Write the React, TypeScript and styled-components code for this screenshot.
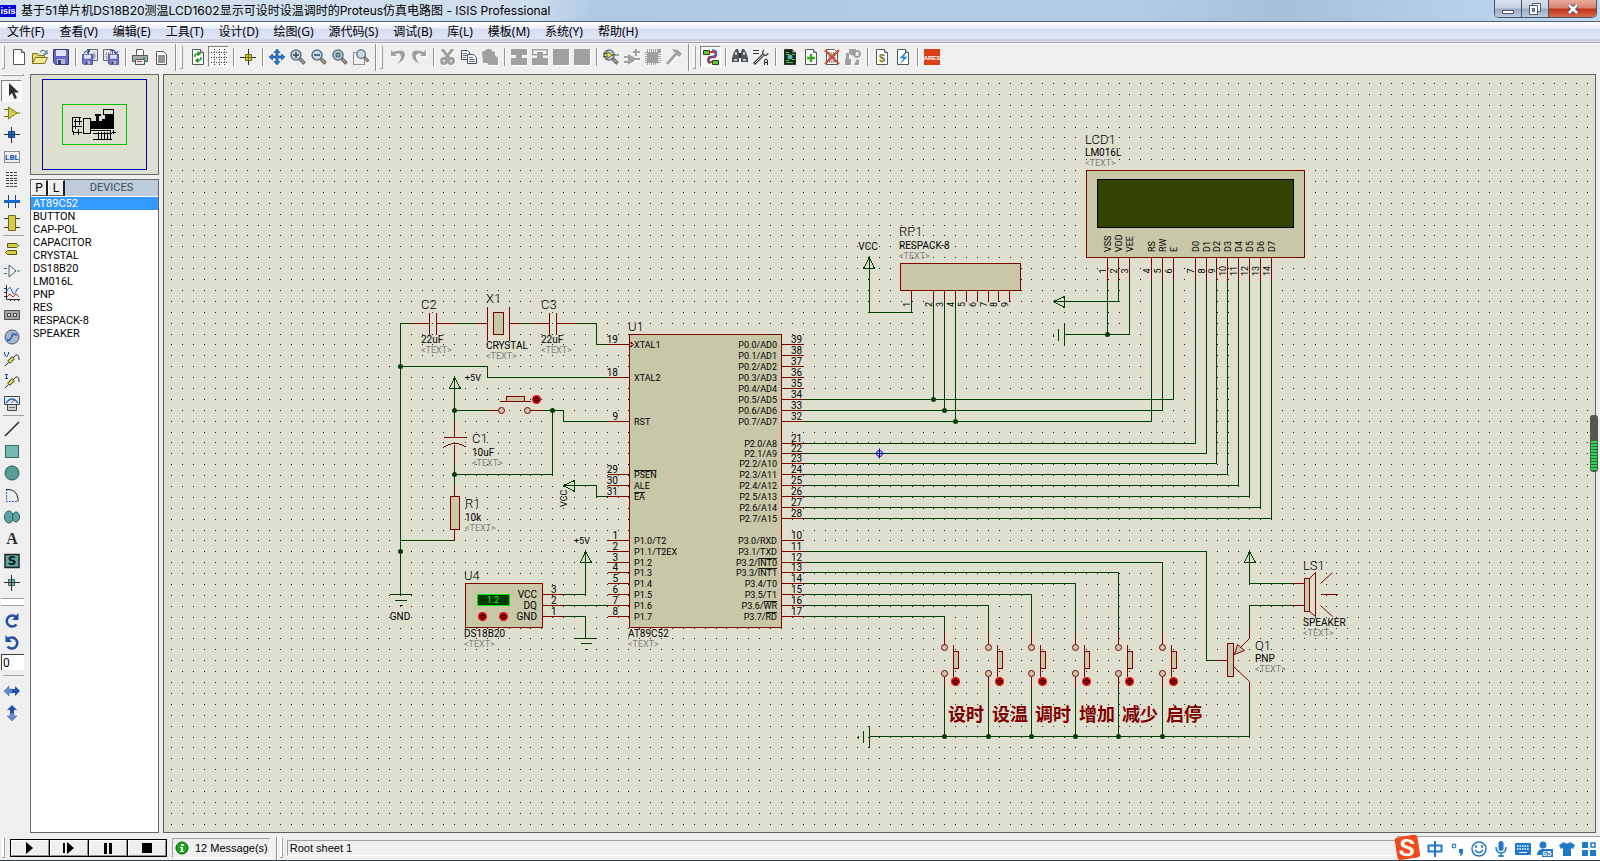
import { Fragment, ReactNode, useState } from 'react';
import styled, { createGlobalStyle, css } from 'styled-components';

const GlobalStyle = createGlobalStyle`
  * {
    box-sizing: border-box;
  }
  body {
    margin: 0;
    background: #efefef;
    color: #000;
    font-family: 'Noto Sans', 'Noto Sans CJK SC', sans-serif;
    font-size: 12px;
  }
  button {
    margin: 0;
    padding: 0;
    border: 0;
    background: none;
    color: inherit;
    font: inherit;
  }
  svg {
    display: block;
  }
`;

const Window = styled.div`
  position: relative;
  display: flex;
  flex-direction: column;
  height: 100vh;
  overflow: hidden;
`;

/* title bar */

const TitleBar = styled.header`
  display: flex;
  flex: none;
  height: 22px;
  padding-right: 3px;
  border-bottom: 1px solid #55606e;
  background: linear-gradient(
    100deg,
    #d3e1ef 0%,
    #cfdeed 33%,
    #b0c9e3 37%,
    #b4cce6 70%,
    #a6bfdb 80%,
    #b5cde8 90%,
    #c2d8ef 100%
  );
`;
const AppIcon = styled.div`
  display: flex;
  align-items: center;
  justify-content: center;
  width: 16px;
  height: 12px;
  margin-top: 5px;
  background: #0000d8;
  color: #fff;
  font: bold 9px/12px 'Liberation Sans', sans-serif;
`;
const Title = styled.h1`
  flex: 1;
  margin: 0 0 0 5px;
  font-family: 'Inter', 'Noto Sans CJK SC', sans-serif;
  font-size: 12px;
  font-weight: 400;
  line-height: 21px;
  white-space: nowrap;
`;
const WindowButtons = styled.div`
  display: flex;
  height: 18px;
  border: 1px solid #4a5564;
  border-top: 0;
  border-radius: 0 0 5px 5px;
  overflow: hidden;
`;
const WindowButton = styled.button<{ $close?: boolean }>`
  display: flex;
  align-items: center;
  justify-content: center;
  width: ${(p) => (p.$close ? 47 : 27)}px;
  border-right: ${(p) => (p.$close ? 0 : 1)}px solid #4a5564;
  background: ${(p) =>
    p.$close
      ? 'linear-gradient(#e7aa9c 0%, #d98270 48%, #bd3118 52%, #d8694a 100%)'
      : 'linear-gradient(#d8e2ee 0%, #c3d0e0 48%, #98abc4 52%, #bccbe0 100%)'};
`;

/* menu */

const MenuBar = styled.nav`
  display: flex;
  flex: none;
  gap: 1px;
  height: 21px;
  border-bottom: 1px solid #a0a0a0;
  background: linear-gradient(#fff 0, #eef1fa 6px, #d6dcf0 7px, #e0e5f6 17px, #b8bfd2 18px, #f6f6f6 20px);
`;
const MenuItem = styled.button`
  padding: 0 7px;
  line-height: 20px;
  white-space: nowrap;
`;

/* toolbars */

const Toolbar = styled.div`
  display: flex;
  flex: none;
  align-items: flex-start;
  height: 31px;
  padding: 0 0 0 8px;
  border-top: 1px solid #fff;
`;
const Grip = styled.span<{ $first?: boolean }>`
  width: 3px;
  height: 23px;
  margin: ${(p) => (p.$first ? '2px 3px 0 -6px' : '2px 4px 0 3px')};
  border: 1px solid #a0a0a0;
  border-width: 0 1px 1px 0;
  box-shadow: inset 1px 0 #fff;
`;
const GroupEnd = styled.span`
  width: 2px;
  height: 27px;
  margin-left: 4px;
  border-left: 1px solid #909090;
  background: #fff;
`;
const Separator = styled.span`
  width: 2px;
  height: 18px;
  margin: 4px 2px 0 4px;
  border-left: 1px solid #909090;
  background: #fff;
`;
const ToolButton = styled.button<{ $pressed?: boolean; $tall?: boolean }>`
  display: flex;
  flex: none;
  align-items: center;
  justify-content: center;
  width: 21px;
  height: ${(p) => (p.$tall ? 22 : 21)}px;
  margin-top: ${(p) => (p.$tall ? 0 : 2)}px;
  ${(p) =>
    p.$pressed &&
    css`
      border: 1px solid #fff;
      border-top-color: #808080;
      border-left-color: #808080;
      background: #f8f8f8;
    `}
  &:disabled svg {
    filter: drop-shadow(1px 1px 0 #fff);
  }
`;

/* work area */

const Workspace = styled.main`
  display: flex;
  flex: 1;
  min-height: 0;
  padding-right: 4px;
`;
const ToolColumn = styled.aside`
  display: flex;
  flex: none;
  flex-direction: column;
  width: 30px;
  padding-left: 1px;
`;
const ColumnGrip = styled.span<{ $split?: boolean }>`
  width: 23px;
  height: ${(p) => (p.$split ? 8 : 2)}px;
  margin: ${(p) => (p.$split ? '4px 0' : '0 0 4px')};
  border: 1px solid #a0a0a0;
  border-width: ${(p) => (p.$split ? '1px 0' : '0 1px 1px 0')};
  background: #fff;
`;
const ColumnSeparator = styled.span<{ $wide?: boolean }>`
  width: 21px;
  height: 1px;
  margin: ${(p) => (p.$wide ? '5px 0 4px 2px' : '1px 0 2px 2px')};
  background: #a0a0a0;
`;
const AngleInput = styled.input`
  width: 23px;
  height: 16px;
  padding: 0 1px;
  border: 0;
  border-top: 1px solid #404040;
  border-left: 1px solid #404040;
  font: 12px 'Roboto', sans-serif;
`;
const SidePanel = styled.section`
  display: flex;
  flex: none;
  flex-direction: column;
  gap: 4px;
  width: 129px;
  margin-right: 4px;
`;
const Overview = styled.div`
  flex: none;
  height: 101px;
  border: 1px solid #696969;
  background: #dfdfcf;
`;
const DeviceBox = styled.div`
  flex: 1;
  border: 1px solid #696969;
  background: #fff;
  font-family: 'Roboto', sans-serif;
`;
const DeviceHeader = styled.div`
  display: flex;
  height: 16px;
  background: #bdcbdb;
`;
const PickButton = styled.button`
  width: 17px;
  border: 1px solid;
  border-color: #fff #606060 #606060 #fff;
  border-right: 2px solid #202020;
  background: #efefef;
  font-size: 12px;
  line-height: 13px;
`;
const DeviceHeading = styled.h2`
  flex: 1;
  margin: 0;
  color: #3c4a5a;
  font-size: 11px;
  font-weight: 400;
  line-height: 16px;
  text-align: center;
`;
const DeviceList = styled.ul`
  margin: 1px 0 0;
  padding: 0;
  list-style: none;
`;
const DeviceItem = styled.li<{ $active: boolean }>`
  height: 13px;
  padding-left: 2px;
  background: ${(p) => (p.$active ? '#3399ff' : 'transparent')};
  color: ${(p) => (p.$active ? '#fff' : '#000')};
  font-size: 11px;
  line-height: 13px;
`;
const Sheet = styled.section`
  flex: 1;
  min-width: 0;
  border: 1px solid #606060;
  background: #dfdfcf;
  overflow: hidden;
`;
const LevelGauge = styled.div`
  position: absolute;
  right: 2px;
  top: 415px;
  width: 8px;
  height: 57px;
  padding: 26px 1px 2px;
  border-radius: 3px;
  background: #56574c;
`;
const LevelFill = styled.div`
  height: 100%;
  background: repeating-linear-gradient(#2bd45a 0 2px, #24703a 2px 3px);
`;

/* status bar */

const StatusBar = styled.footer`
  display: flex;
  flex: none;
  align-items: flex-start;
  height: 28px;
  padding: 5px 0 0 2px;
  border-bottom: 1px solid #2c3e50;
  font: 11px 'Liberation Sans', sans-serif;
`;
const StatusGrip = styled.span`
  width: 3px;
  height: 20px;
  border: 1px solid #a0a0a0;
  border-width: 0 1px 1px 0;
  background: #fff;
`;
const Transport = styled.div`
  display: flex;
  gap: 1px;
  height: 18px;
  margin: 1px 5px 0;
  padding: 1px;
  background: #000;
`;
const TransportButton = styled.button`
  display: flex;
  align-items: center;
  justify-content: center;
  width: 38px;
  border: 1px solid;
  border-color: #fff #909090 #909090 #fff;
  background: #efefef;
`;
const Messages = styled.div`
  display: flex;
  align-items: center;
  gap: 6px;
  height: 20px;
  padding: 0 2px;
  border: 1px solid;
  border-color: #a0a0a0 #fff #fff #a0a0a0;
  white-space: nowrap;
`;
const StatusSplit = styled.span`
  width: 2px;
  height: 23px;
  margin: -1px 2px 0 5px;
  border-left: 1px solid #909090;
  background: #fff;
`;
const SheetName = styled.div`
  flex: 1;
  height: 16px;
  margin: 2px 0 0 4px;
  padding-left: 2px;
  border: 1px solid;
  border-color: #a0a0a0 #fff #fff #a0a0a0;
  line-height: 14px;
`;
const ImeBar = styled.div`
  position: absolute;
  right: 0;
  bottom: 1px;
  display: flex;
  align-items: center;
  gap: 6px;
  height: 24px;
  padding-right: 3px;
  border-top: 1px solid #a0a0a8;
  background: #fff;
`;
const ImeButton = styled.button`
  width: 16px;
  height: 16px;
`;
const ImeLogo = styled.span`
  width: 28px;
  height: 28px;
  margin: -2px 0 0 -4px;
`;

/* icons */

const page = <path d='M2.5 .5h8l3 3v12h-11z' fill='#fff' stroke='#505860' />;
const fold = <path d='M10.5 .5v3h3' fill='#dde4ec' stroke='#505860' />;
const floppy = (
  <g>
    <path d='M.5 .5h15v15h-13l-2-2z' fill='#6868c8' stroke='#38387c' />
    <path d='M3 1h10v6H3z' fill='#dce4f4' />
    <path d='M4 10h8v5H4z' fill='#b8b8c8' />
    <path d='M5 11h3v4H5z' fill='#38387c' />
  </g>
);
const lens = (
  <>
    <path d='M9.5 9.5l5 5' stroke='#50565c' strokeWidth='3.4' />
    <path d='M10 10l4 4' stroke='#c8a888' strokeWidth='1.4' />
    <circle cx='6' cy='6' r='5' fill='#c4dcec' stroke='#60707c' strokeWidth='1.5' />
  </>
);
const probe = (
  <>
    <path d='M1 15l4-4' stroke='#303030' />
    <path d='M4.5 11.5l5-5' stroke='#605c18' strokeWidth='4' />
    <path d='M5 11l4-4' stroke='#e8e070' strokeWidth='2' />
    <path d='M9 7l3-3q3-1 3 5' fill='none' stroke='#303030' />
  </>
);
const gray = '#a0a0a0';

const icons: Record<string, ReactNode> = {
  new: <>{page}{fold}</>,
  open: (
    <>
      <path d='M.5 14.5v-10h5l1 2h6v3' fill='#e8d870' stroke='#807020' />
      <path d='M.5 14.5l3-6h12l-3 6z' fill='#f8ec98' stroke='#807020' />
      <path d='M8 3q4-4 6 1m1-3v4h-4' fill='none' stroke='#305880' />
    </>
  ),
  save: floppy,
  importSec: (
    <>
      <path d='M6.5 .5h9v11h-9z' fill='#e4e8f0' stroke='#606870' />
      <path d='M8 6h6M8 8h6M12 3v7' stroke='#8890a0' />
      <g transform='translate(0 5) scale(.68)'>{floppy}</g>
      <path d='M2 4q1-3 5-2M5 0l3 2-3 2' fill='none' stroke='#1830a0' />
    </>
  ),
  exportSec: (
    <>
      <path d='M.5 .5h9v11h-9z' fill='#e4e8f0' stroke='#606870' />
      <rect x='3' y='4' width='5' height='5' fill='none' stroke='#a04040' strokeDasharray='1 1' />
      <g transform='translate(5 5) scale(.68)'>{floppy}</g>
      <path d='M7 2q5-2 6 2M11 3l2 2 2-3' fill='none' stroke='#1830a0' />
    </>
  ),
  print: (
    <>
      <path d='M4.5 6.5v-6h6l1 1v5' fill='#fff' stroke='#505860' />
      <path d='M.5 6.5h15v6H.5z' fill='#a8acb0' stroke='#50565c' />
      <path d='M3.5 10.5h9v5h-9z' fill='#e8ecf0' stroke='#50565c' />
      <path d='M11 8h2v2h-2z' fill='#20c020' />
      <path d='M5 12h5v1H5z' fill='#c04040' />
    </>
  ),
  area: (
    <>
      <path d='M3.5 2.5h7l3 3v10h-10z' fill='#fff' stroke='#505860' />
      <path d='M6 7h5v6H6z' fill='#909498' />
      <path d='M5.500 6.500h6v7h-6z' fill='none' stroke='#202020' strokeDasharray='1 1' />
    </>
  ),
  redraw: (
    <>
      {page}{fold}
      <path d='M5 8V6.500q0-2 4-2M7.500 2.500l2.500 2-2.500 2M11 8v1.500q0 2-4 2M8.500 9.500l-2.500 2 2.500 2' fill='none' stroke='#1c9420' strokeWidth='1.500' />
    </>
  ),
  grid: <path d='M3.500 0v16M8.500 0v16M13.500 0v16M0 3.500h16M0 8.500h16M0 13.500h16' stroke='#303030' strokeDasharray='1 1.500' />,
  origin: (
    <>
      <path d='M8.500 0v16M0 8.500h16' stroke='#303030' />
      <path d='M5.500 5.500h6v6h-6z' fill='#d8cc38' stroke='#706810' />
      <path d='M8.500 5v7M5 8.500h7' stroke='#706810' />
    </>
  ),
  pan: <path d='M8 0l3 3.500H9V7h3.500V5L16 8l-3.500 3V9H9v3.500h2L8 16l-3-3.500h2V9H3.500v2L0 8l3.500-3v2H7V3.500H5z' fill='#2878d8' stroke='#10428c' strokeWidth='.6' />,
  zoomIn: <>{lens}<path d='M3 6h6M6 3v6' stroke='#304858' strokeWidth='1.500' /></>,
  zoomOut: <>{lens}<path d='M3 6h6' stroke='#304858' strokeWidth='1.500' /></>,
  zoomAll: <>{lens}<path d='M4 4h4v4H4z' fill='#8098a8' stroke='#485c68' /></>,
  zoomArea: (
    <>
      <path d='M.500 3.500h11v12H.500z' fill='none' stroke='#303030' strokeDasharray='1 1' />
      <g transform='translate(3 0) scale(.85)'>{lens}</g>
    </>
  ),
  undo: <path d='M1 1v6h6L5 5q6-2 6 3 0 3-4 7 8-3 8-9 0-7-12-3z' fill={gray} />,
  redo: <path d='M15 1v6H9l2-2Q5 3 5 8q0 3 4 7Q1 12 1 6q0-7 12-3z' fill={gray} />,
  cut: (
    <>
      <path d='M2 0l8 10M13 0L5 10' stroke={gray} strokeWidth='3' />
      <circle cx='4' cy='12' r='2.500' fill='none' stroke={gray} strokeWidth='3' />
      <circle cx='11' cy='12' r='2.500' fill='none' stroke={gray} strokeWidth='3' />
    </>
  ),
  copy: (
    <>
      <path d='M.500 1.500h6l2 2v7h-8z' fill='#fff' stroke='#405068' />
      <path d='M6.500 5.500h6l3 3v6h-9z' fill='#fff' stroke='#405068' />
      <path d='M2 4.500h4M2 6.500h4M2 8.500h3M8 8.500h4M8 10.500h6M8 12.500h6' stroke='#607088' />
    </>
  ),
  paste: <path d='M0 3l4-2 1-1h4l1 2 3 1v3l3 3v7H7l-2-2H1z' fill={gray} />,
  blockCopy: <path d='M0 0h16v6h-5v3h5v7H0V9h5V6H0z' fill={gray} />,
  blockMove: (
    <>
      <path d='M.750 .750h14.500v5H.750z' fill='none' stroke={gray} strokeWidth='1.500' />
      <path d='M5 3h6v6h5v7H0V9h5z' fill={gray} />
    </>
  ),
  block: <path d='M0 0h16v16H0z' fill={gray} />,
  pick: (
    <>
      {lens}
      <path d='M4 2.500v7L9.500 6z' fill='#e8dc58' stroke='#706810' />
      <path d='M0 4.500h4M0 7.500h4M9 6h7' stroke='#386048' />
    </>
  ),
  makeDevice: <path d='M4 5l9 5-9 6zM0 7h4v2H0zM0 12h4v2H0zM12 9h4v2h-4zM11 0h2v2h3v2h-3v3h-2V4H9V2h2z' fill={gray} />,
  packaging: (
    <>
      <path d='M2 3h11v11H2z' fill={gray} />
      <path d='M2 8h12' stroke={gray} strokeWidth='16' strokeDasharray='1 1' />
      <path d='M8 3v11' stroke={gray} strokeWidth='16' strokeDasharray='1 1' />
      <path d='M12 0h4v3l-3 2z' fill={gray} />
    </>
  ),
  hammer: <path d='M6 0l6 1 4 4-3 3-2-2-9 10-2-2 9-10z' fill={gray} />,
  wireAuto: (
    <>
      <path d='M5 3h5q3 0 3 3t-4 2-4 3 3 2h3' fill='none' stroke='#d83020' strokeWidth='2' />
      <path d='M9 1q6 0 4 5L9 8q-5 2-2 6' fill='none' stroke='#2060c8' strokeWidth='1.500' />
      <path d='M.500 1.500h6v4h-6zM9.500 11.500h6v4h-6z' fill='#70c030' stroke='#205010' />
    </>
  ),
  search: (
    <>
      <path d='M2 3l2-3h2l1 3v10H0V9zM14 3l-2-3h-2L9 3v10h7V9z' fill='#50585c' />
      <path d='M7 4h2v5H7z' fill='#303438' />
      <path d='M2 10h3v2H2zM11 10h3v2h-3zM3 3h2v3H3zM11 3h2v3h-2z' fill='#c0c8cc' />
    </>
  ),
  property: (
    <>
      <path d='M0 1.500h6M0 4.500h6' stroke='#303030' />
      <path d='M1 15L11 5' stroke='#404448' strokeWidth='3' />
      <path d='M2 14L11 5' stroke='#c8ccd0' />
      <path d='M11 1q-3 3 0 5 3 1 4-2' fill='none' stroke='#50585c' strokeWidth='1.500' />
      <path d='M11.500 16v-4l1-2h1l1 2v4M11.500 13.500h3' fill='none' stroke='#202020' />
    </>
  ),
  design: (
    <>
      <path d='M2.500 .500h8l3 3v12h-11z' fill='#182818' stroke='#303030' />
      <path d='M4 3.500h3M4 5.500h3M4 11.500h3M4 13.500h7M10 5.500h3M10 10.500h3' stroke='#40d840' />
      <circle cx='8' cy='8' r='2.500' fill='#58b8b8' />
      {fold}
    </>
  ),
  newSheet: <>{page}{fold}<path d='M8 5v8M4 9h8' stroke='#38a818' strokeWidth='2.500' /></>,
  removeSheet: (
    <>
      {page}
      <path d='M5 4h6v9H5z' fill='#c8ccd0' stroke='#505050' strokeDasharray='1 1' />
      <path d='M1 1l14 14M15 1L1 15' stroke='#d04830' strokeWidth='2' />
    </>
  ),
  exitSheet: (
    <>
      <path d='M4 0h7v5l-2 2-3-1-2-1zM1 4h3v6H1zM0 10h6v6H0zM9 16l3-6 2 1v5z' fill={gray} />
      <circle cx='12' cy='5' r='3' fill='none' stroke={gray} strokeWidth='2' />
    </>
  ),
  bom: <>{page}{fold}<text x='5' y='13' fontSize='11' fontWeight='bold' fill='#807818' fontFamily='Liberation Sans'>$</text></>,
  erc: <>{page}{fold}<path d='M10 4L5 9h4l-3 5 6-6H8l3-4z' fill='#20a8e8' stroke='#1060a8' strokeWidth='.500' /></>,
  ares: (
    <>
      <path d='M0 0h16v16H0z' fill='#d84018' />
      <text x='8' y='11' fontSize='6' fontWeight='bold' fill='#fff' textAnchor='middle' fontFamily='Liberation Sans'>ARES</text>
    </>
  ),
  pointer: <path d='M5 0v13l3-3 2.500 6 2.500-1-2.500-5.500h4.500z' fill='#303030' />,
  component: (
    <>
      <path d='M0 4.500h4M0 11.500h4M12 8h4' stroke='#706810' />
      <path d='M4.500 2v12L13 8z' fill='#d8cc48' stroke='#807818' />
    </>
  ),
  junction: (
    <>
      <path d='M7.500 0v16M0 7.500h16' stroke='#303030' />
      <path d='M4.500 4.500h6v6h-6z' fill='#2070d0' stroke='#104080' />
      <path d='M7.500 4v7M4 7.500h7' stroke='#104080' />
    </>
  ),
  label: (
    <>
      <path d='M.500 2.500h15v11H.500z' fill='none' stroke='#303030' strokeDasharray='1 1' />
      <text x='8' y='11' fontSize='8' fontWeight='bold' textAnchor='middle' fill='#1050a8' fontFamily='Roboto'>LBL</text>
    </>
  ),
  script: <path d='M2 1.500h11M2 4.500h11M2 7.500h11M2 9.500h11M2 12.500h11M2 15.500h11' stroke='#404040' strokeDasharray='3 1' />,
  bus: (
    <>
      <path d='M4.500 2v13M11.500 2v13' stroke='#104890' />
      <path d='M0 8.500h16' stroke='#1868c8' strokeWidth='3' />
    </>
  ),
  subcircuit: (
    <>
      <path d='M0 3.500h4M0 12.500h4M12 3.500h4M12 12.500h4' stroke='#404040' />
      <path d='M4.500 .500h7v15h-7z' fill='#d8cc48' stroke='#706810' />
    </>
  ),
  terminal: <path d='M3.500 2.500h9l2 2-2 2h-9zM12.500 9.500h-9l-2 2 2 2h9z' fill='#d8cc48' stroke='#605810' />,
  devicePin: (
    <>
      <path d='M0 5.500h3M0 10.500h3M13 8h3' stroke='#208080' />
      <path d='M5 2v12l7-6z' fill='#f0f4f8' stroke='#505860' />
    </>
  ),
  graph: (
    <>
      <path d='M2.500 0v14.500H16M0 3.500h3M0 7.500h3M0 11.500h3M6.500 14v2M10.500 14v2M14.500 14v2' fill='none' stroke='#303030' />
      <path d='M3 6q3-7 5 0t5-2l2-1' fill='none' stroke='#1868c8' />
      <path d='M3 12l3-3 3 3 3-3 3 3' fill='none' stroke='#d03020' />
    </>
  ),
  tape: (
    <>
      <path d='M.500 3.500h15v9H.500z' fill='#a8a8a8' stroke='#505050' />
      <path d='M3.500 6.500h3v3h-3zM9.500 6.500h3v3h-3z' fill='#e8e8e8' stroke='#404040' />
    </>
  ),
  generator: (
    <>
      <circle cx='8' cy='8' r='7' fill='#a8b4c8' stroke='#505c70' />
      <path d='M3 10q2 3 4-1t2-4 4 1' fill='none' stroke='#1858b8' strokeWidth='1.500' />
    </>
  ),
  voltProbe: <>{probe}<path d='M.500 1v2l2 3 2-3V1' fill='none' stroke='#1050a8' /></>,
  ampProbe: <>{probe}<path d='M1 1.500h3M1 5.500h3M2.500 1v5' fill='none' stroke='#1050a8' /></>,
  instrument: (
    <>
      <path d='M.500 1.500h15v8H.500z' fill='#e8f0f8' stroke='#404850' />
      <path d='M2 8q6-8 12 0' fill='none' stroke='#1868c8' strokeWidth='1.500' />
      <path d='M7 8l4-4' stroke='#d03020' />
      <path d='M3.500 9.500h9v6h-9z' fill='#d0d4d8' stroke='#404850' />
      <path d='M5 12.500h6' stroke='#707478' />
    </>
  ),
  line: <path d='M1 15L15 1' stroke='#202020' strokeWidth='1.500' />,
  box: <path d='M1.500 2.500h13v12h-13z' fill='#78b8b4' stroke='#306868' />,
  circle: <circle cx='8' cy='8' r='7' fill='#5c9c98' stroke='#285c5c' />,
  arc: (
    <>
      <path d='M2.500 2v12.500H14' fill='none' stroke='#1868c8' strokeDasharray='2 1' />
      <path d='M2 2.500h3q8 1 9 9v3' fill='none' stroke='#202020' />
    </>
  ),
  path2d: (
    <>
      <ellipse cx='5' cy='8' rx='4.500' ry='6' fill='#5ca4a0' stroke='#285c5c' />
      <ellipse cx='12' cy='8' rx='3.500' ry='5' fill='#5ca4a0' stroke='#285c5c' />
    </>
  ),
  text: <text x='8' y='13' fontSize='16' fontWeight='bold' textAnchor='middle' fill='#303030' fontFamily='Liberation Serif'>A</text>,
  symbol: (
    <>
      <path d='M1 1.500h14v13H1z' fill='#5ca4a0' stroke='#202020' strokeWidth='1.500' />
      <text x='8' y='12' fontSize='12' fontWeight='bold' textAnchor='middle' fill='#101818' fontFamily='DejaVu Sans'>S</text>
    </>
  ),
  marker: (
    <>
      <path d='M4.500 4.500h6v6h-6z' fill='#78b8b4' stroke='#306868' />
      <path d='M7.500 0v16M0 7.500h16' stroke='#303030' />
    </>
  ),
  rotateCw: (
    <>
      <path d='M12.500 11.500A5.500 5.500 0 1 1 12 4' fill='none' stroke='#2050a8' strokeWidth='2.500' />
      <path d='M14.500 0v7H8z' fill='#2050a8' />
    </>
  ),
  rotateCcw: (
    <>
      <path d='M3.500 11.500A5.500 5.500 0 1 0 4 4' fill='none' stroke='#2050a8' strokeWidth='2.500' />
      <path d='M1.500 0v7H8z' fill='#2050a8' />
    </>
  ),
  mirrorX: (
    <>
      <path d='M0 8l5-5v3h3v4H5v3z' fill='#6888d0' stroke='#4060a8' strokeWidth='.500' />
      <path d='M16 8l-5-5v3H8v4h3v3z' fill='#2050a8' />
    </>
  ),
  mirrorY: (
    <>
      <path d='M8 0L3 5h3v3h4V5h3z' fill='#2050a8' />
      <path d='M8 16l-5-5h3V8h4v3h3z' fill='#6888d0' stroke='#4060a8' strokeWidth='.500' />
    </>
  ),
};

const Icon = ({ name }: { name: string }) => (
  <svg width='16' height='16' viewBox='0 0 16 16' aria-hidden='true'>
    {icons[name]}
  </svg>
);

const toolbarGroups: string[][][] = [
  [['new', 'open', 'save'], ['importSec', 'exportSec'], ['print', 'area']],
  [['redraw', 'grid'], ['origin'], ['pan', 'zoomIn', 'zoomOut', 'zoomAll', 'zoomArea']],
  [
    ['undo', 'redo'],
    ['cut', 'copy', 'paste'],
    ['blockCopy', 'blockMove', 'block', 'block'],
    ['pick', 'makeDevice', 'packaging', 'hammer'],
  ],
  [['wireAuto'], ['search', 'property'], ['design', 'newSheet', 'removeSheet', 'exitSheet'], ['bom', 'erc'], ['ares']],
];
const pressed = ['grid', 'wireAuto', 'pointer'];
const disabled = [
  'undo', 'redo', 'cut', 'paste', 'blockCopy', 'blockMove', 'block',
  'makeDevice', 'packaging', 'hammer', 'exitSheet',
];
const columnGroups = [
  ['pointer', 'component', 'junction', 'label', 'script', 'bus', 'subcircuit'],
  ['terminal', 'devicePin', 'graph', 'tape', 'generator', 'voltProbe', 'ampProbe', 'instrument'],
  ['line', 'box', 'circle', 'arc', 'path2d', 'text', 'symbol', 'marker'],
];
const menus = [
  '文件(F)', '查看(V)', '编辑(E)', '工具(T)', '设计(D)', '绘图(G)',
  '源代码(S)', '调试(B)', '库(L)', '模板(M)', '系统(Y)', '帮助(H)',
];
const devices = [
  'AT89C52', 'BUTTON', 'CAP-POL', 'CAPACITOR', 'CRYSTAL', 'DS18B20',
  'LM016L', 'PNP', 'RES', 'RESPACK-8', 'SPEAKER',
];

/* schematic */

const Drawing = styled.svg`
  width: 100%;
  height: 100%;
  font-family: 'Roboto', 'Noto Sans CJK SC', sans-serif;
`;
const Wire = styled.path`
  fill: none;
  stroke: #004000;
  shape-rendering: crispEdges;
`;
const Lead = styled(Wire)`
  stroke: #800000;
`;
const Body = styled.path`
  fill: #c8c8a8;
  stroke: #800000;
  shape-rendering: crispEdges;
`;
const RefText = styled.text`
  font-size: 13px;
  font-weight: 300;
`;
const ValueText = styled.text`
  font-size: 10px;
`;
const HintText = styled.text`
  fill: #808080;
  font-size: 9px;
`;
const PinText = styled.text`
  font-size: 9px;
`;
const PinNumber = styled.text`
  font-size: 10px;
`;
const Overline = styled.tspan`
  text-decoration: overline;
`;
const KeyText = styled.text`
  fill: #800000;
  font-size: 18px;
  font-weight: 700;
`;

const PITCH = 10.892;
let dots = '';
for (let row = 0; row < 100; row++) {
  for (let col = 0; col < 240; col++) {
    dots += `M${171 + Math.round(col * PITCH)} ${83 + Math.round(row * PITCH)}h1v1h-1z`;
  }
}

const leftPins: [number, string, number, boolean?][] = [
  [19, 'XTAL1', 344], [18, 'XTAL2', 377], [9, 'RST', 421],
  [29, 'PSEN', 474, true], [30, 'ALE', 485], [31, 'EA', 496, true],
  [1, 'P1.0/T2', 540], [2, 'P1.1/T2EX', 551], [3, 'P1.2', 562], [4, 'P1.3', 572],
  [5, 'P1.4', 583], [6, 'P1.5', 594], [7, 'P1.6', 605], [8, 'P1.7', 616],
];
const rightPins: [number, string, number, string?][] = [
  [39, 'P0.0/AD0', 344], [38, 'P0.1/AD1', 355], [37, 'P0.2/AD2', 366], [36, 'P0.3/AD3', 377],
  [35, 'P0.4/AD4', 388], [34, 'P0.5/AD5', 399], [33, 'P0.6/AD6', 410], [32, 'P0.7/AD7', 421],
  [21, 'P2.0/A8', 443], [22, 'P2.1/A9', 453], [23, 'P2.2/A10', 463], [24, 'P2.3/A11', 474],
  [25, 'P2.4/A12', 485], [26, 'P2.5/A13', 496], [27, 'P2.6/A14', 507], [28, 'P2.7/A15', 518],
  [10, 'P3.0/RXD', 540], [11, 'P3.1/TXD', 551], [12, 'P3.2/', 562, 'INT0'], [13, 'P3.3/', 572, 'INT1'],
  [14, 'P3.4/T0', 583], [15, 'P3.5/T1', 594], [16, 'P3.6/', 605, 'WR'], [17, 'P3.7/', 616, 'RD'],
];
// [pin name, x, y where its net turns towards the controller]
const lcdPins: [string, number, number?][] = [
  ['VSS', 1107], ['VDD', 1118], ['VEE', 1129],
  ['RS', 1151, 421], ['RW', 1162, 410], ['E', 1173, 399],
  ['D0', 1195, 443], ['D1', 1206, 453], ['D2', 1216, 463], ['D3', 1227, 474],
  ['D4', 1238, 485], ['D5', 1249, 496], ['D6', 1260, 507], ['D7', 1271, 518],
];
const packPins = [911, 933, 944, 955, 966, 977, 988, 998, 1009];
const keys: [string, number, number][] = [
  ['设时', 944, 616], ['设温', 988, 605], ['调时', 1031, 594],
  ['增加', 1075, 583], ['减少', 1118, 572], ['启停', 1162, 562],
];
const nodes = [
  [400, 366], [400, 551], [454, 410], [454, 474], [552, 410],
  [933, 399], [944, 410], [955, 421], [1107, 334],
];

const Part = ({ x, y, name, value, valueY }: { x: number; y: number; name: string; value: string; valueY: number }) => (
  <>
    <RefText x={x} y={y}>{name}</RefText>
    <ValueText x={x} y={valueY}>{value}</ValueText>
    <HintText x={x} y={valueY + 10}>&lt;TEXT&gt;</HintText>
  </>
);

const Actuator = ({ x, y }: { x: number; y: number }) => (
  <g>
    <circle cx={x} cy={y} r='4.500' fill='#e80c0c' />
    <path d={`M${x - 3} ${y}h6M${x} ${y - 3}v6`} stroke='#400000' strokeWidth='3' />
    <path d={`M${x - 2} ${y}h4`} stroke='#c00000' />
  </g>
);

const Schematic = () => (
  <Drawing role='img' aria-label='Schematic sheet'>
    <g transform='translate(-164 -75)'>
      <path d={dots} fill='#202020' shapeRendering='crispEdges' />
      <g transform='translate(.5 .5)'>
        {/* oscillator, reset and ground */}
        <Wire d='M411 323H400V594M455 323h21M520 323h11M574 323h22V344h11M400 366h87v11h120M400 540h54' />
        <Wire d='M389 594h22M394 600h12M399 605h3M454 377v44M449 388l5-11 6 11zM454 410h33M543 410h20v11h44M552 410v64h-98M454 463v22' />
        <Lead d='M411 323h18M429 312v22M436 312v22M436 323h19M476 323h11M487 306v34M509 306v34M509 323h11M531 323h18M549 312v22M556 312v22M556 323h18' />
        <Lead d='M487 410h11M530 410h13M499 401h31M454 421v16M443 437h23M443 447q11-8 23 0M454 444v19M454 485v11M454 529v11' />
        <Body d='M493 312h10v22h-10zM506 396h18v5h-18zM450 496h9v33h-9z' />
        <circle cx='501' cy='410' r='3' fill='#c8c8a8' stroke='#800000' />
        <circle cx='527' cy='410' r='3' fill='#c8c8a8' stroke='#800000' />
        <Actuator x={536} y={399} />

        {/* controller */}
        <Body d='M629 334h152v293H629z' />
        <Lead d='M629 341l4 3-4 3' />
        {leftPins.map(([no, , y]) => <Lead key={no} d={`M607 ${y}h22`} />)}
        {rightPins.map(([no, , y]) => <Lead key={no} d={`M781 ${y}h22`} />)}
        <Wire d='M607 496h-11v-11h-33l11-5v11l-11-6' />

        {/* temperature sensor */}
        <Body d='M465 583h77v44h-77z' />
        <Lead d='M542 594h21M542 605h21M542 616h21' />
        <Wire d='M563 594h22v-43M580 562l5-11 6 11zM563 605h44M563 616h22v22M574 638h22M580 643h11M584 649h3' />
        <path d='M477 594h32v11h-32z' fill='#003800' stroke='#00f000' shapeRendering='crispEdges' />
        <Actuator x={482} y={616} />
        <Actuator x={503} y={616} />

        {/* resistor pack */}
        <Body d='M900 263h120v27H900z' />
        {packPins.map((x) => <Lead key={x} d={`M${x} 290v11`} />)}
        <Wire d='M869 257v55h42v-11M863 268l6-11 5 11zM933 301v98M944 301v109M955 301v120' />

        {/* display */}
        <Body d='M1086 170h218v87h-218z' />
        <path d='M1097 179h196v48h-196z' fill='#334400' stroke='#000' shapeRendering='crispEdges' />
        {lcdPins.map(([name, x, y]) => (
          <Fragment key={name}>
            <Lead d={`M${x} 257v23`} />
            {y && <Wire d={`M${x} 280V${y}H803`} />}
          </Fragment>
        ))}
        <Wire d='M1107 280v54M1118 280v21h-65l11-5v11l-11-6M1129 280v54h-65M1064 323v22M1058 328v12M1053 333v3' />

        {/* keys */}
        {keys.map(([name, x, y]) => (
          <g key={name}>
            <Wire d={`M803 ${y}H${x}V632M${x} 687v49`} />
            <Lead d={`M${x} 632v12M${x} 676v11M${x + 9} 644v32`} />
            <Body d={`M${x + 9} 651h5v17h-5z`} />
            <circle cx={x} cy='647' r='3' fill='#c8c8a8' stroke='#800000' />
            <circle cx={x} cy='673' r='3' fill='#c8c8a8' stroke='#800000' />
            <Actuator x={x + 11} y={681} />
          </g>
        ))}
        <Wire d='M869 736h380v-44M869 725v22M863 730v12M858 735v3M803 551h403v109h10' />

        {/* speaker driver */}
        <Lead d='M1216 660h11M1249 627v11M1249 681v11' />
        <path d='M1233 654l16-16M1233 666l16 15' stroke='#800000' />
        <Body d='M1227 643h6v33h-6z' />
        <path d='M1234 654l3-10 7 6z' fill='#c8c8a8' stroke='#800000' />
        <Wire d='M1249 627v-22h44M1293 583h-44v-32M1244 562l5-11 6 11z' />
        <Lead d='M1293 583h11M1293 605h11M1320 594h17' />
        <Body d='M1304 578h5v33h-5z' />
        <path d='M1309 578l6-6v44l-6-5M1320 583l12-11M1320 605l12 11' fill='none' stroke='#800000' />

        {nodes.map(([x, y]) => <circle key={`${x}-${y}`} cx={x} cy={y} r='2.500' fill='#004000' />)}
        {keys.map(([name, x]) => <circle key={name} cx={x} cy='736' r='2.500' fill='#004000' />)}
        <path d='M879 448v10M875 453h9' stroke='#0000c0' />
        <circle cx='879' cy='453' r='3' fill='none' stroke='#0000c0' />
      </g>

      {leftPins.map(([no, name, y, bar]) => (
        <Fragment key={no}>
          <PinNumber x='618' y={y - 1} textAnchor='end'>{no}</PinNumber>
          <PinText x='634' y={y + 4}>{bar ? <Overline>{name}</Overline> : name}</PinText>
        </Fragment>
      ))}
      {rightPins.map(([no, name, y, bar]) => (
        <Fragment key={no}>
          <PinNumber x='791' y={y - 1}>{no}</PinNumber>
          <PinText x='777' y={y + 4} textAnchor='end'>
            {name}{bar && <Overline>{bar}</Overline>}
          </PinText>
        </Fragment>
      ))}
      {packPins.map((x, i) => (
        <PinText key={x} transform={`translate(${x - 1} 307) rotate(-90)`}>{i + 1}</PinText>
      ))}
      {lcdPins.map(([name, x], i) => (
        <Fragment key={name}>
          <PinText transform={`translate(${x + 4} 252) rotate(-90)`}>{name}</PinText>
          <PinText transform={`translate(${x - 1} 271) rotate(-90)`} textAnchor='middle'>{i + 1}</PinText>
        </Fragment>
      ))}

      <Part x={421} y={309} name='C2' value='22uF' valueY={343} />
      <Part x={486} y={303} name='X1' value='CRYSTAL' valueY={349} />
      <Part x={541} y={309} name='C3' value='22uF' valueY={343} />
      <Part x={472} y={443} name='C1' value='10uF' valueY={456} />
      <Part x={465} y={508} name='R1' value='10k' valueY={521} />
      <Part x={628} y={331} name='U1' value='AT89C52' valueY={637} />
      <Part x={464} y={580} name='U4' value='DS18B20' valueY={637} />
      <Part x={899} y={236} name='RP1' value='RESPACK-8' valueY={249} />
      <Part x={1085} y={144} name='LCD1' value='LM016L' valueY={156} />
      <Part x={1303} y={570} name='LS1' value='SPEAKER' valueY={626} />
      <Part x={1255} y={650} name='Q1' value='PNP' valueY={662} />

      <PinText x='465' y='381'>+5V</PinText>
      <PinText x='574' y='544'>+5V</PinText>
      <ValueText x='868' y='250' textAnchor='middle'>VCC</ValueText>
      <ValueText x='400' y='620' textAnchor='middle'>GND</ValueText>
      <PinText transform='translate(567 507) rotate(-90)'>VCC</PinText>
      <ValueText x='537' y='598' textAnchor='end'>VCC</ValueText>
      <ValueText x='537' y='609' textAnchor='end'>DQ</ValueText>
      <ValueText x='537' y='620' textAnchor='end'>GND</ValueText>
      <PinNumber x='551' y='593'>3</PinNumber>
      <PinNumber x='551' y='604'>2</PinNumber>
      <PinNumber x='551' y='615'>1</PinNumber>
      <PinText x='493' y='603' textAnchor='middle' fill='#20f020'>1.2</PinText>
      {keys.map(([name, x]) => <KeyText key={name} x={x + 4} y='721'>{name}</KeyText>)}
    </g>
  </Drawing>
);

const OverviewMap = () => (
  <svg width='127' height='99' shapeRendering='crispEdges' aria-hidden='true'>
    <path d='M11.500 4.500h104v90h-104z' fill='none' stroke='#0000c0' />
    <path d='M31.500 29.500h64v40h-64z' fill='none' stroke='#00c000' />
    <path
      d='M41.500 42v15M41 42.500h9M43 46.500h8M41 51.500h10M44 44v10M48 43v7M42 57.500h9M52.500 43.500h7v15h-7zM47 54v6M42 56v4'
      fill='none'
      stroke='#000'
    />
    <path d='M60 46h23v8H60zM64 39h6v2h-2v5h-3v-5h-1zM71 44h3v-4h9v8H71zM60 55h20v1H60zM62 58h19v1H62z' />
    <path d='M72.500 34.500h10v5h-10z' fill='none' stroke='#000' />
    <path d='M67.500 57v7M70.500 57v7M73.500 57v7M76.500 57v7M79.500 56v8M62 64.500h19M81 57h4M82.500 55v4' fill='none' stroke='#000' />
  </svg>
);

const blue = '#2078c8';
const imeIcons: [string, ReactNode][] = [
  ['Language', <path d='M1.500 4.500h13v6h-13zM8 0v16' fill='none' stroke={blue} strokeWidth='2' />],
  ['Punctuation', <><circle cx='5' cy='5' r='1.800' fill='none' stroke={blue} strokeWidth='1.200' /><path d='M10 8h4v3q0 3-3 4v-2l1-1h-2z' fill={blue} /></>],
  ['Emoji', <><circle cx='8' cy='8' r='7' fill='none' stroke={blue} strokeWidth='1.500' /><path d='M5 4v3M11 4v3M4 9q4 5 8 0' fill='none' stroke={blue} strokeWidth='1.500' /></>],
  ['Voice', <><rect x='5.500' y='0' width='5' height='10' rx='2.500' fill={blue} /><path d='M3 6q0 6 5 6t5-6M8 12v4M5 15h6' fill='none' stroke={blue} strokeWidth='1.500' /></>],
  ['Keyboard', <><rect x='0' y='2' width='16' height='12' rx='1' fill={blue} /><path d='M2 5h12M2 8h12' stroke='#fff' strokeWidth='1.500' strokeDasharray='1.500 1' /><path d='M4 11.500h8' stroke='#fff' /></>],
  ['Account', <><circle cx='6' cy='4' r='3.500' fill={blue} /><path d='M0 14q0-6 6-6 4 0 5 2v4z' fill={blue} /><rect x='5' y='8' width='11' height='8' fill={blue} /><text x='10' y='15' fontSize='8' fontWeight='bold' textAnchor='middle' fill='#fff' fontFamily='Liberation Sans'>65</text></>],
  ['Skin', <path d='M5 1q3 3 6 0l5 3-2 4-2-1v8H4V7L2 8 0 4z' fill={blue} />],
  ['Toolbox', <><path d='M1 1h6v6H1zM1 9h6v6H1zM9 9h6v6H9z' fill={blue} /><path d='M10 2h4v4h-4z' fill='none' stroke={blue} strokeWidth='1.500' /></>],
];

const transport = [
  ['Play', 'M2 0l7 6-7 6z'],
  ['Step', 'M0 1h2v10H0zM4 0l7 6-7 6z'],
  ['Pause', 'M2 1h3v11H2zM7 1h3v11H7z'],
  ['Stop', 'M1 1h10v10H1z'],
];

const App = () => {
  const [device, setDevice] = useState(devices[0]);
  const [angle, setAngle] = useState('0');

  return (
    <Window>
      <GlobalStyle />
      <TitleBar>
        <AppIcon>isis</AppIcon>
        <Title>基于51单片机DS18B20测温LCD1602显示可设时设温调时的Proteus仿真电路图 - ISIS Professional</Title>
        <WindowButtons>
          <WindowButton aria-label='Minimize'>
            <svg width='12' height='12'><path d='M.500 7.500h11v3H.500z' fill='#fff' stroke='#50586c' /></svg>
          </WindowButton>
          <WindowButton aria-label='Restore'>
            <svg width='12' height='12'>
              <path d='M3.500 .500h8v8h-8z' fill='#fff' stroke='#50586c' />
              <path d='M.500 2.500h8v9h-8z' fill='#fff' stroke='#50586c' />
              <path d='M3.500 5.500h2v3h-2z' fill='#a0b0c8' stroke='#50586c' />
            </svg>
          </WindowButton>
          <WindowButton $close aria-label='Close'>
            <svg width='12' height='10'>
              <path d='M2 1l8 8M10 1L2 9' stroke='#50485c' strokeWidth='4.500' />
              <path d='M2 1l8 8M10 1L2 9' stroke='#fff' strokeWidth='2.500' />
            </svg>
          </WindowButton>
        </WindowButtons>
      </TitleBar>

      <MenuBar>
        {menus.map((menu) => <MenuItem key={menu}>{menu}</MenuItem>)}
      </MenuBar>

      <Toolbar>
        {toolbarGroups.map((group, g) => (
          <Fragment key={g}>
            {g > 0 && <GroupEnd />}
            <Grip $first={g === 0} />
            {group.map((names, n) => (
              <Fragment key={n}>
                {n > 0 && <Separator />}
                {names.map((name, i) => (
                  <ToolButton
                    key={i}
                    aria-label={name}
                    $pressed={pressed.includes(name)}
                    disabled={disabled.includes(name)}
                  >
                    <Icon name={name} />
                  </ToolButton>
                ))}
              </Fragment>
            ))}
          </Fragment>
        ))}
      </Toolbar>

      <Workspace>
        <ToolColumn>
          <ColumnGrip />
          {columnGroups.map((names, g) => (
            <Fragment key={g}>
              {g > 0 && <ColumnSeparator />}
              {names.map((name) => (
                <ToolButton key={name} $tall aria-label={name} $pressed={pressed.includes(name)}>
                  <Icon name={name} />
                </ToolButton>
              ))}
            </Fragment>
          ))}
          <ColumnGrip $split />
          <ToolButton $tall aria-label='rotate clockwise'><Icon name='rotateCw' /></ToolButton>
          <ToolButton $tall aria-label='rotate anti-clockwise'><Icon name='rotateCcw' /></ToolButton>
          <AngleInput aria-label='Angle' value={angle} onChange={(e) => setAngle(e.target.value)} />
          <ColumnSeparator $wide />
          <ToolButton $tall aria-label='mirror x'><Icon name='mirrorX' /></ToolButton>
          <ToolButton $tall aria-label='mirror y'><Icon name='mirrorY' /></ToolButton>
        </ToolColumn>

        <SidePanel>
          <Overview>
            <OverviewMap />
          </Overview>
          <DeviceBox>
            <DeviceHeader>
              <PickButton>P</PickButton>
              <PickButton>L</PickButton>
              <DeviceHeading>DEVICES</DeviceHeading>
            </DeviceHeader>
            <DeviceList>
              {devices.map((name) => (
                <DeviceItem key={name} $active={name === device} onClick={() => setDevice(name)}>
                  {name}
                </DeviceItem>
              ))}
            </DeviceList>
          </DeviceBox>
        </SidePanel>

        <Sheet>
          <Schematic />
        </Sheet>
      </Workspace>

      <StatusBar>
        <StatusGrip />
        <Transport>
          {transport.map(([name, d]) => (
            <TransportButton key={name} aria-label={name}>
              <svg width='12' height='12'><path d={d} /></svg>
            </TransportButton>
          ))}
        </Transport>
        <Messages>
          <svg width='14' height='14'>
            <circle cx='7' cy='7' r='6' fill='#18a818' stroke='#086008' />
            <path d='M6 3h3v2H6zM5 6h3v4h1v1H5v-1h1V7H5z' fill='#fff' />
          </svg>
          12 Message(s)
        </Messages>
        <StatusSplit />
        <StatusGrip />
        <SheetName>Root sheet 1</SheetName>
      </StatusBar>

      <LevelGauge>
        <LevelFill />
      </LevelGauge>
      <ImeBar>
        <ImeLogo>
          <svg width='28' height='28'>
            <rect x='3' y='2' width='23' height='23' rx='3' fill='#ee4c1c' transform='rotate(-9 14 14)' />
            <text x='14' y='22' fontSize='24' fontWeight='bold' textAnchor='middle' fill='#fff' fontFamily='Liberation Sans' transform='rotate(6 14 14)'>S</text>
          </svg>
        </ImeLogo>
        {imeIcons.map(([name, icon]) => (
          <ImeButton key={name} aria-label={name}>
            <svg width='16' height='16'>{icon}</svg>
          </ImeButton>
        ))}
      </ImeBar>
    </Window>
  );
};

export default App;
